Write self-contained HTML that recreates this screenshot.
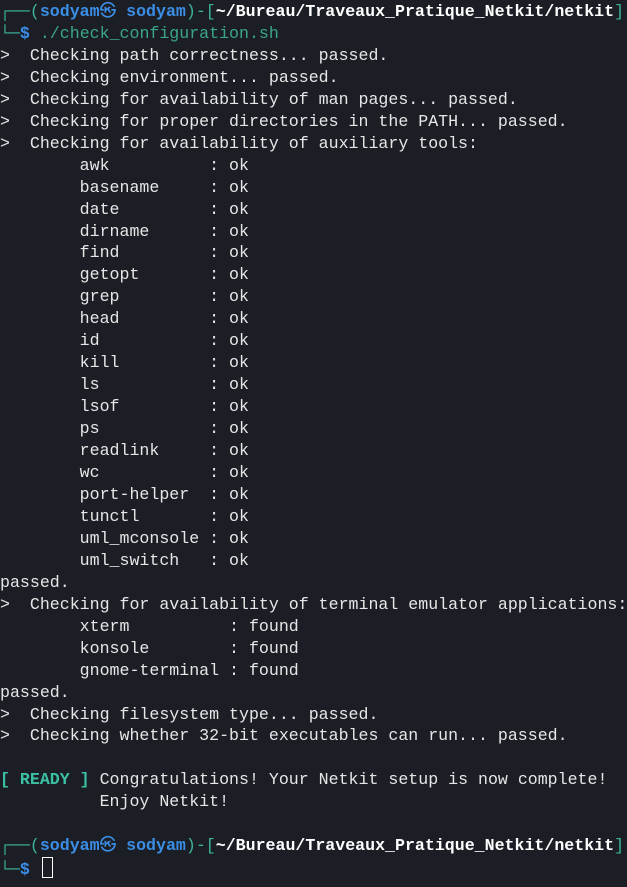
<!DOCTYPE html>
<html><head><meta charset="utf-8"><style>
html,body{margin:0;padding:0;background:#1b1e25;width:627px;height:887px;overflow:hidden}
pre{margin:0;position:absolute;top:1px;left:0px;font-family:"Liberation Mono","DejaVu Sans Mono","Noto Sans CJK JP",monospace;font-size:16.6px;line-height:21.95px;color:#e6e6e6;white-space:pre}
.t{color:#3cb49c}.b{color:#3b8ee6;font-weight:bold}.w{color:#fff;font-weight:bold}.c{color:#3aa58c}
.r{color:#3cc0a4;font-weight:bold}
.cur{display:inline-block;width:9px;height:19px;border:1px solid #fff;vertical-align:-4px;margin-left:2px}
</style></head><body><pre><span class="t">┌──(</span><span class="b">sodyam㉿ sodyam</span><span class="t">)-[</span><span class="w">~/Bureau/Traveaux_Pratique_Netkit/netkit</span><span class="t">]</span>
<span class="t">└─</span><span class="b">$</span> <span class="c">./check_configuration.sh</span>
&gt;  Checking path correctness... passed.
&gt;  Checking environment... passed.
&gt;  Checking for availability of man pages... passed.
&gt;  Checking for proper directories in the PATH... passed.
&gt;  Checking for availability of auxiliary tools:
        awk          : ok
        basename     : ok
        date         : ok
        dirname      : ok
        find         : ok
        getopt       : ok
        grep         : ok
        head         : ok
        id           : ok
        kill         : ok
        ls           : ok
        lsof         : ok
        ps           : ok
        readlink     : ok
        wc           : ok
        port-helper  : ok
        tunctl       : ok
        uml_mconsole : ok
        uml_switch   : ok
passed.
&gt;  Checking for availability of terminal emulator applications:
        xterm          : found
        konsole        : found
        gnome-terminal : found
passed.
&gt;  Checking filesystem type... passed.
&gt;  Checking whether 32-bit executables can run... passed.

<span class="r">[ READY ]</span> Congratulations! Your Netkit setup is now complete!
          Enjoy Netkit!

<span class="t">┌──(</span><span class="b">sodyam㉿ sodyam</span><span class="t">)-[</span><span class="w">~/Bureau/Traveaux_Pratique_Netkit/netkit</span><span class="t">]</span>
<span class="t">└─</span><span class="b">$</span> <span class="cur"></span></pre></body></html>
